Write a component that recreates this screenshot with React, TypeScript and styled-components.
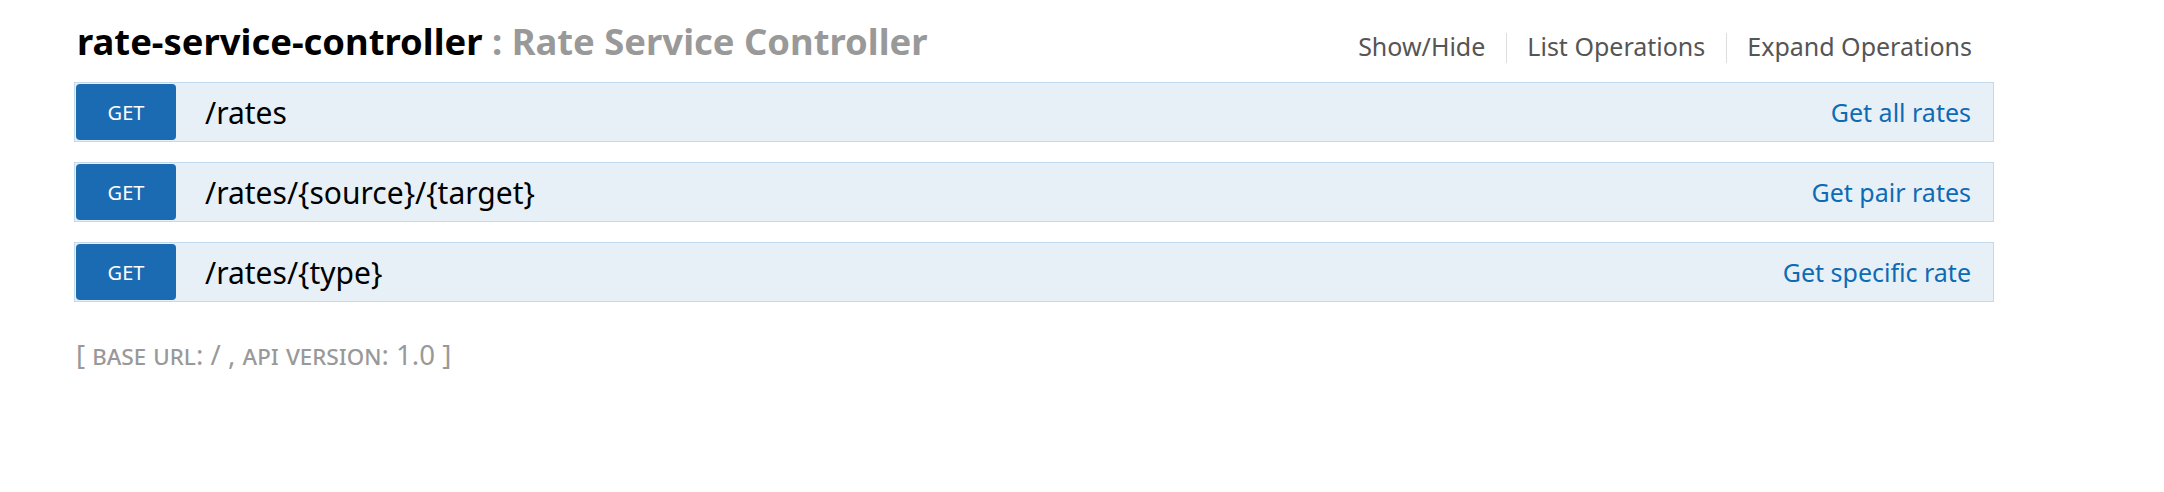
import React from "react";
import styled, { createGlobalStyle } from "styled-components";

const GlobalStyle = createGlobalStyle`
  html, body { margin: 0; padding: 0; background: #fff; }
  body { font-family: "Noto Sans", "Open Sans", sans-serif; }
`;

const Page = styled.div`
  display: flex;
  flex-direction: column;
  padding: 16px 0 0 74px;
  width: 1920px;
`;

const Header = styled.div`
  display: flex;
  justify-content: space-between;
  align-items: flex-start;
  height: 66px;
`;

const Title = styled.h2`
  margin: 3px 0 0 3px;
  font-size: 36.4px;
  line-height: 44px;
  font-weight: 700;
  color: #000;
`;

const TitleSub = styled.span`
  color: #999;
`;

const Links = styled.ul`
  list-style: none;
  margin: 17px 22px 0 0;
  padding: 0;
  display: flex;
`;

const LinkItem = styled.li<{ $first?: boolean }>`
  height: 30px;
  box-sizing: border-box;
  display: flex;
  align-items: center;
  padding: 0 21px 4px 20px;
  border-left: ${(p) => (p.$first ? "none" : "1px solid #ddd")};
  font-size: 25px;
  color: #555;
  &:last-child { padding-right: 0; }
`;

const OpList = styled.div`
  display: flex;
  flex-direction: column;
  gap: 20px;
`;

const Row = styled.div`
  display: flex;
  align-items: center;
  height: 58px;
  padding: 0 22px 0 1px;
  background: #e7f0f7;
  border: 1px solid #c3d9ec;
`;

const Method = styled.span`
  width: 100px;
  height: 56px;
  border-radius: 4px;
  background: #1a6bb2;
  color: #fff;
  font-size: 20px;
  display: flex;
  align-items: center;
  justify-content: center;
  flex-shrink: 0;
`;

const Path = styled.span`
  margin-left: 29px;
  font-size: 30px;
  color: #000;
  flex: 1;
`;

const Desc = styled.span`
  font-size: 25px;
  color: #0f6ab4;
`;

const Footer = styled.div`
  margin: 33px 0 0 2px;
  font-size: 27.6px;
  line-height: 38px;
  color: #999;
`;

const SmallCaps = styled.span`
  font-variant: small-caps;
`;

const ops = [
  { path: "/rates", desc: "Get all rates" },
  { path: "/rates/{source}/{target}", desc: "Get pair rates" },
  { path: "/rates/{type}", desc: "Get specific rate" },
];

export default function App() {
  return (
    <>
      <GlobalStyle />
      <Page>
        <Header>
          <Title>
            rate-service-controller <TitleSub>: Rate Service Controller</TitleSub>
          </Title>
          <Links>
            <LinkItem $first>Show/Hide</LinkItem>
            <LinkItem>List Operations</LinkItem>
            <LinkItem>Expand Operations</LinkItem>
          </Links>
        </Header>
        <OpList>
          {ops.map((o) => (
            <Row key={o.path}>
              <Method>GET</Method>
              <Path>{o.path}</Path>
              <Desc>{o.desc}</Desc>
            </Row>
          ))}
        </OpList>
        <Footer>
          [ <SmallCaps>base url</SmallCaps>: / , <SmallCaps>api version</SmallCaps>: 1.0 ]
        </Footer>
      </Page>
    </>
  );
}
